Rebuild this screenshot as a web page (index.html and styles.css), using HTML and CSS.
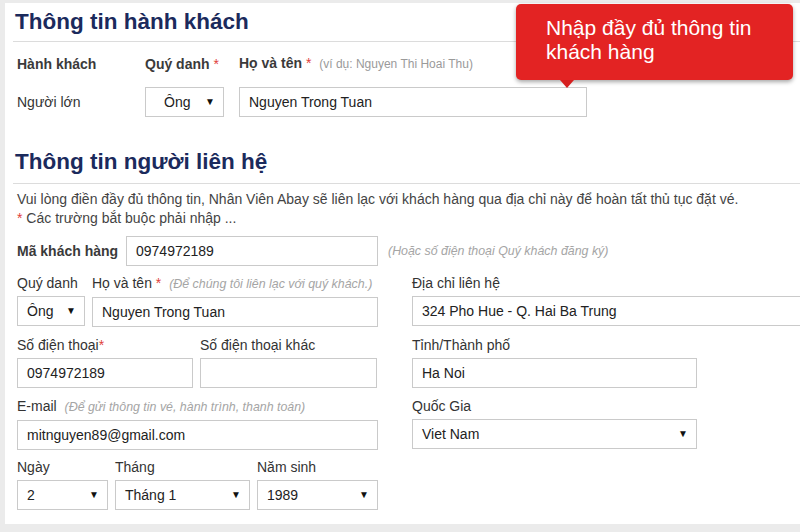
FILE: index.html
```html
<!DOCTYPE html>
<html lang="vi">
<head>
    <meta charset="UTF-8">
    <meta name="viewport" content="width=device-width, initial-scale=1.0">
    <title>Thông tin hành khách</title>
    <link rel="stylesheet" href="styles.css">
</head>
<body>
    <div class="page">
        <section class="pax">
            <h2 class="title">Thông tin hành khách</h2>
            <div class="pax-row pax-labels">
                <span class="lbl strong">Hành khách</span>
                <span class="lbl strong">Quý danh <span class="req">*</span></span>
                <span class="lbl strong">Họ và tên <span class="req">*</span> <span class="hint">(ví dụ: Nguyen Thi Hoai Thu)</span></span>
            </div>
            <div class="pax-row pax-inputs">
                <span class="lbl">Người lớn</span>
                <div class="select select-center" id="pax-title"><span>Ông</span><span class="arrow">▼</span></div>
                <div class="field" id="pax-name">Nguyen Trong Tuan</div>
            </div>
        </section>

        <section class="contact">
            <h2 class="title title-2">Thông tin người liên hệ</h2>
            <p class="note">Vui lòng điền đầy đủ thông tin, Nhân Viên Abay sẽ liên lạc với khách hàng qua địa chỉ này để hoàn tất thủ tục đặt vé.<br><span class="req">*</span> Các trường bắt buộc phải nhập ...</p>

            <div class="code-row">
                <span class="lbl strong code-lbl">Mã khách hàng</span>
                <div class="field" id="cust-code">0974972189</div>
                <span class="hint hint-i">(Hoặc số điện thoại Quý khách đăng ký)</span>
            </div>

            <div class="contact-grid">
                <div class="group">
                    <div class="col" id="c-title">
                        <span class="lbl">Quý danh</span>
                        <div class="select"><span>Ông</span><span class="arrow">▼</span></div>
                    </div>
                    <div class="col grow">
                        <span class="lbl">Họ và tên <span class="req">*</span> <span class="hint hint-i">(Để chúng tôi liên lạc với quý khách.)</span></span>
                        <div class="field">Nguyen Trong Tuan</div>
                    </div>
                </div>
                <div class="group">
                    <div class="col grow">
                        <span class="lbl">Địa chỉ liên hệ</span>
                        <div class="field field-wide">324 Pho Hue - Q. Hai Ba Trung</div>
                    </div>
                </div>

                <div class="group">
                    <div class="col" id="c-phone">
                        <span class="lbl">Số điện thoại<span class="req">*</span></span>
                        <div class="field">0974972189</div>
                    </div>
                    <div class="col" id="c-phone2">
                        <span class="lbl">Số điện thoại khác</span>
                        <div class="field"></div>
                    </div>
                </div>
                <div class="group">
                    <div class="col" id="c-city">
                        <span class="lbl">Tỉnh/Thành phố</span>
                        <div class="field">Ha Noi</div>
                    </div>
                </div>

                <div class="group">
                    <div class="col grow">
                        <span class="lbl">E-mail <span class="hint hint-i">(Để gửi thông tin vé, hành trình, thanh toán)</span></span>
                        <div class="field">mitnguyen89@gmail.com</div>
                    </div>
                </div>
                <div class="group">
                    <div class="col" id="c-country">
                        <span class="lbl">Quốc Gia</span>
                        <div class="select"><span>Viet Nam</span><span class="arrow">▼</span></div>
                    </div>
                </div>

                <div class="group last">
                    <div class="col" id="c-day">
                        <span class="lbl">Ngày</span>
                        <div class="select"><span>2</span><span class="arrow">▼</span></div>
                    </div>
                    <div class="col" id="c-month">
                        <span class="lbl">Tháng</span>
                        <div class="select"><span>Tháng 1</span><span class="arrow">▼</span></div>
                    </div>
                    <div class="col grow">
                        <span class="lbl">Năm sinh</span>
                        <div class="select"><span>1989</span><span class="arrow">▼</span></div>
                    </div>
                </div>
            </div>
        </section>
    </div>

    <div class="tooltip">Nhập đầy đủ thông tin<br>khách hàng</div>
</body>
</html>
```

FILE: styles.css
```css
body {
    margin: 0;
    background-color: #ebebeb;
    font-family: "Liberation Sans", Arial, Helvetica, sans-serif;
    color: #333;
}
.page {
    margin: 3px 0 0 5px;
    height: 521px;
    padding-left: 12px;
    background-color: #fff;
    overflow: hidden;
}
.title {
    margin: 5px 0 0 -4px;
    padding: 0 0 5px 2px;
    font-size: 22.5px;
    line-height: 28px;
    color: #1b2a5c;
    border-bottom: 1px solid #dcdcdc;
}
.title-2 {
    margin-top: 31px;
    padding-bottom: 7px;
}
.lbl {
    font-size: 14px;
    line-height: 20px;
    color: #333;
    white-space: nowrap;
}
.strong {
    font-weight: bold;
    color: #3a3a3a;
}
.req {
    color: #e0403a;
    font-weight: normal;
}
.hint {
    font-size: 12px;
    font-weight: normal;
    color: #9a9a9a;
    margin-left: 4px;
}
.hint-i {
    font-size: 12.4px;
    font-style: italic;
    color: #a5a5a5;
}

/* hanh khach */
.pax-row {
    display: grid;
    grid-template-columns: 128px 94px 1fr;
    align-items: center;
}
.pax-labels {
    margin-top: 11px;
}
.pax-inputs {
    margin-top: 13px;
}
#pax-title {
    width: 79px;
}
#pax-name {
    width: 348px;
}

.field, .select {
    box-sizing: border-box;
    height: 30px;
    border: 1px solid #cacaca;
    padding: 0 9px;
    font-size: 14px;
    line-height: 28px;
    color: #222;
    background-color: #fff;
    white-space: nowrap;
}
.select {
    display: flex;
    justify-content: space-between;
    padding-right: 8px;
}
.select-center {
    padding-left: 18px;
}
.arrow {
    font-size: 10px;
    color: #111;
}

/* lien he */
.note {
    margin: 6px 0 0;
    font-size: 14px;
    line-height: 19px;
    color: #444;
}
.code-row {
    display: flex;
    align-items: center;
    margin-top: 8px;
}
.code-lbl {
    width: 109px;
}
#cust-code {
    width: 252px;
}
.code-row .hint {
    margin-left: 10px;
}
.contact-grid {
    display: grid;
    grid-template-columns: 361px 1fr;
    column-gap: 34px;
    row-gap: 8px;
    margin-top: 7px;
}
.group {
    display: flex;
    gap: 7px;
}
.group.last {
    margin-top: -1px;
}
.col {
    display: flex;
    flex-direction: column;
    gap: 3px;
}
.grow {
    flex: 1;
}
.field-wide {
    margin-right: -4px;
}
#c-title {
    width: 68px;
}
#c-phone {
    width: 176px;
}
#c-phone2 {
    width: 177px;
}
#c-city, #c-country {
    width: 285px;
}
#c-day {
    width: 91px;
}
#c-month {
    width: 135px;
}

.tooltip {
    position: absolute;
    top: 4px;
    left: 516px;
    width: 247px;
    height: 64px;
    padding: 12px 0 0 30px;
    background-color: #e32323;
    border-radius: 5px;
    box-shadow: 0 2px 4px rgba(0, 0, 0, 0.35);
    color: #fff;
    font-size: 21px;
    line-height: 24px;
}
.tooltip::after {
    content: "";
    position: absolute;
    left: 44px;
    bottom: -8px;
    border-left: 7px solid transparent;
    border-right: 7px solid transparent;
    border-top: 8px solid #d61f1f;
}
```
